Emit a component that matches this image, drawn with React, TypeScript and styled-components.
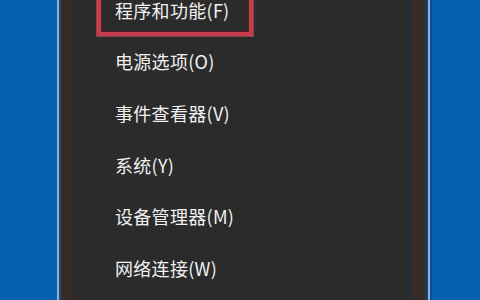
import { createGlobalStyle } from "styled-components";
import styled from "styled-components";

const GlobalStyle = createGlobalStyle`
  html, body {
    margin: 0;
    padding: 0;
    height: 100%;
    overflow: hidden;
  }
  body {
    background: #0562b1;
    font-family: "Noto Sans CJK SC", "Noto Sans", sans-serif;
  }
`;

const Desktop = styled.div`
  display: flex;
  width: 480px;
  height: 300px;
  padding-left: 57px;
  box-sizing: border-box;
  background: #0562b1;
  overflow: hidden;
`;

// the context menu, with the scaled window edge shading on both sides
const MenuPanel = styled.div`
  width: 375px;
  height: 100%;
  background: linear-gradient(
    to right,
    #86b5dc 0px,
    #86b5dc 2px,
    #1b4c7e 2px,
    #1b4c7e 4px,
    #3b2a26 4px,
    #352a27 12px,
    #2b2b2b 21px,
    #2b2b2b 350px,
    #252d36 350px,
    #272c32 355px,
    #372b27 355px,
    #372b27 368px,
    #1d3d63 368px,
    #1d3d63 371px,
    #8ab6dc 371px,
    #8ab6dc 373px,
    #0b4d8f 373px,
    #0b4d8f 375px
  );
`;

const MenuList = styled.ul`
  list-style: none;
  margin: -16px 0 0 0;
  padding: 0;
`;

const MenuItem = styled.li`
  position: relative;
  display: flex;
  align-items: center;
  height: 51.6px;
  padding-left: 58px;
  color: #f1f1f1;
  font-size: 18px;
  letter-spacing: 0.3px;
  white-space: nowrap;
`;

// red annotation drawn over the first entry
const Highlight = styled.span`
  position: absolute;
  left: 40px;
  top: 2px;
  width: 156px;
  height: 50px;
  box-sizing: border-box;
  border: 4px solid #c53c4c;
  box-shadow: 0 0 0 1px rgba(214, 90, 104, 0.55), inset 0 0 0 1px rgba(120, 20, 30, 0.6);
`;

const items = [
  "程序和功能(F)",
  "电源选项(O)",
  "事件查看器(V)",
  "系统(Y)",
  "设备管理器(M)",
  "网络连接(W)",
];

export default function App() {
  return (
    <>
      <GlobalStyle />
      <Desktop>
        <MenuPanel>
          <MenuList>
            {items.map((label, i) => (
              <MenuItem key={label}>
                {i === 0 && <Highlight />}
                {label}
              </MenuItem>
            ))}
          </MenuList>
        </MenuPanel>
      </Desktop>
    </>
  );
}
